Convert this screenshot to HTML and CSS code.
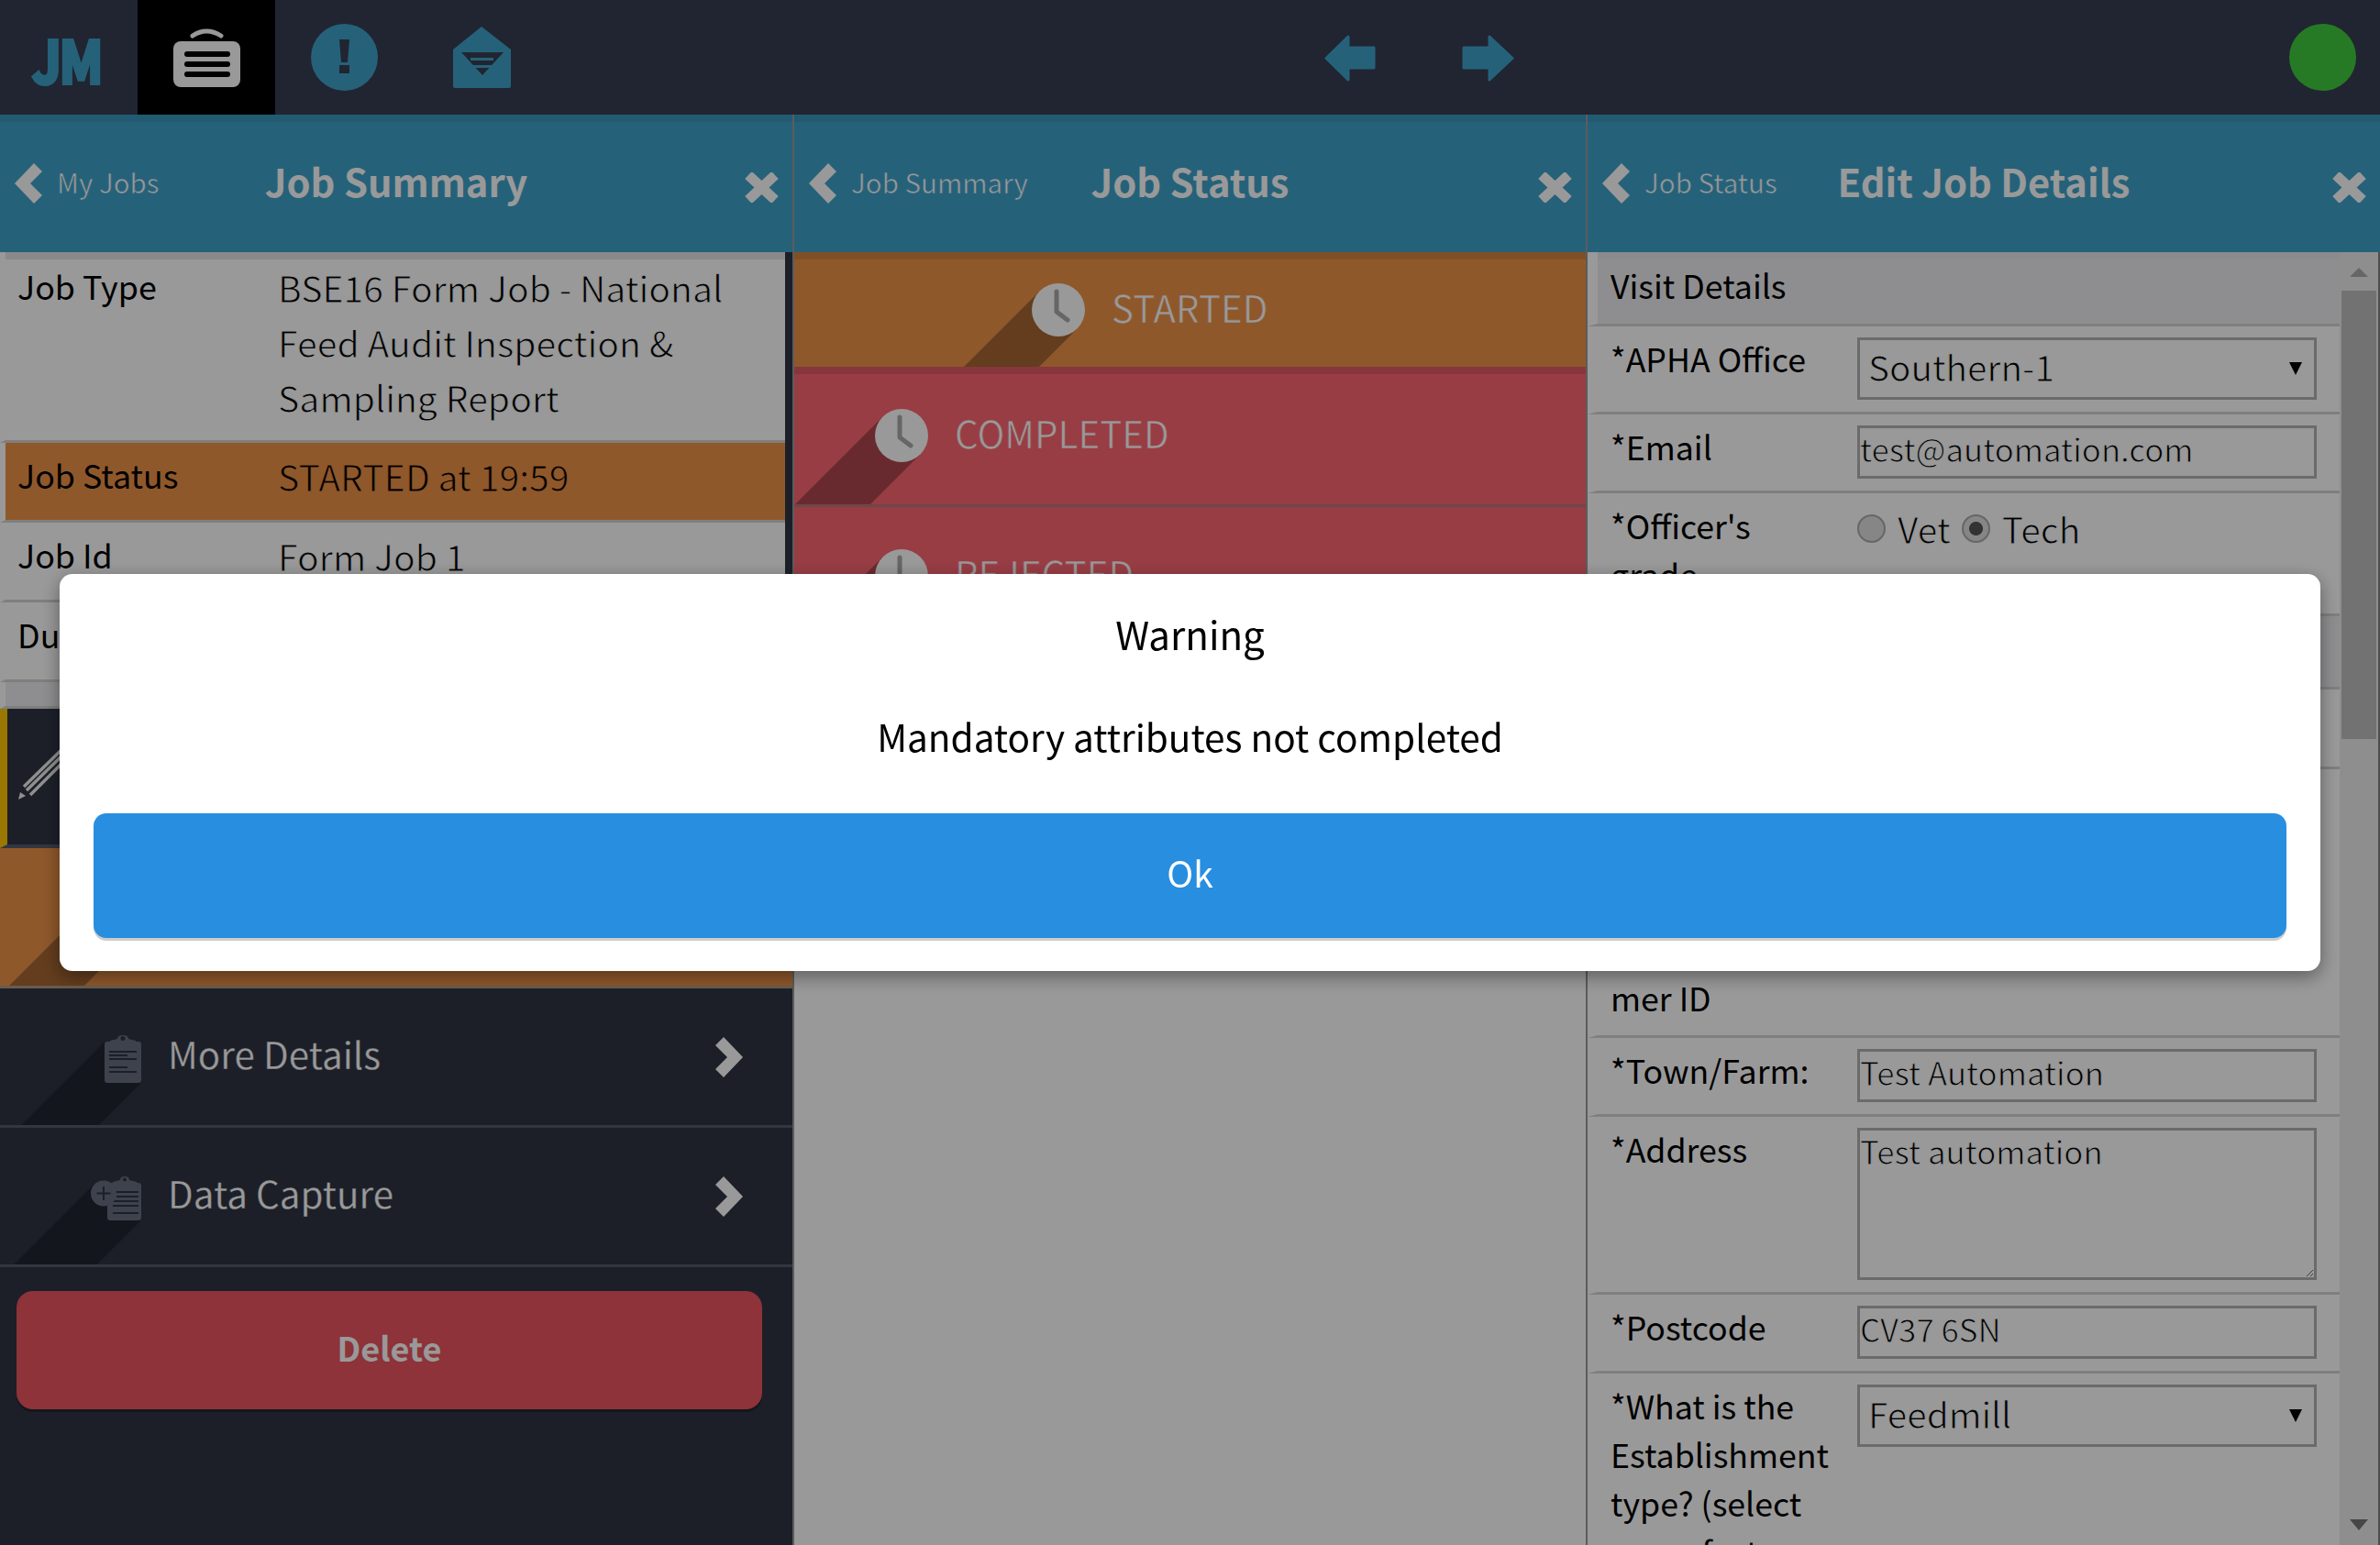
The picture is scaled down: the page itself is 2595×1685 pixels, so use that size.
FILE: index.html
```html
<!DOCTYPE html>
<html lang="en">
<head>
<meta charset="UTF-8" />
<meta name="viewport" content="width=device-width, initial-scale=1" />
<title>Edit Job Details</title>
<link rel="stylesheet" href="styles.css">
</head>
<body>
  <svg class="defs" aria-hidden="true">
    <symbol id="clock" viewBox="-29 -29 58 58" overflow="visible">
      <polygon class="long-shadow" points="-20.5,-20.5 -320.5,279.5 -279.5,320.5 20.5,20.5" />
      <circle r="29" fill="#fff" />
      <path d="M-2 -20 V2 L10 11" fill="none" stroke="#aaa" stroke-width="5" stroke-linecap="round" stroke-linejoin="round" />
    </symbol>
    <symbol id="chev-left" viewBox="0 0 30 44"><polygon points="21,0 30,9 17,22 30,35 21,44 0,22" fill="#fff" /></symbol>
    <symbol id="chev-right" viewBox="0 0 30 44"><polygon points="9,0 0,9 13,22 0,35 9,44 30,22" fill="#fff" /></symbol>
    <symbol id="close" viewBox="0 0 37 33"><path d="M4 3 L33 30 M33 3 L4 30" stroke="#fff" stroke-width="11" /></symbol>
  </svg>

  <div class="app">
    <nav class="topbar">
      <div class="nav-group">
        <a class="nav-item"><span class="logo">JM</span></a>
        <a class="nav-item active">
          <svg width="73" height="64" viewBox="0 0 73 64">
            <path d="M21 8 Q36 -2 52 8" fill="none" stroke="#fff" stroke-width="5" stroke-linecap="round" />
            <rect y="14" width="73" height="50" rx="8" fill="#fff" />
            <rect x="12" y="25" width="50" height="6" rx="3" fill="#000" />
            <rect x="12" y="36" width="50" height="6" rx="3" fill="#000" />
            <rect x="12" y="47" width="50" height="6" rx="3" fill="#000" />
          </svg>
        </a>
        <a class="nav-item">
          <svg width="73" height="73" viewBox="0 0 73 73">
            <circle cx="36.5" cy="36.5" r="36.5" fill="#3ea3cc" />
            <polygon points="31,17 42,17 40,42 33,42" fill="#373e52" />
            <rect x="31" y="45" width="11" height="9" fill="#373e52" />
          </svg>
        </a>
        <a class="nav-item">
          <svg width="63" height="67" viewBox="0 0 63 67">
            <path d="M31 0 L63 25 V65 Q63 67 61 67 H2 Q0 67 0 65 V25 Z" fill="#3ea3cc" />
            <polygon points="9,28 55,28 32,53" fill="#373e52" />
            <rect x="19" y="34" width="25" height="3" fill="#3ea3cc" />
            <rect x="20" y="42" width="24" height="3" fill="#3ea3cc" />
          </svg>
        </a>
      </div>
      <div class="nav-group history">
        <a class="nav-item">
          <svg width="56" height="51" viewBox="0 0 56 51"><path d="M26 2 L2 25.5 L26 49 V36 H54 V14 H26 Z" fill="#3ea3cc" stroke="#3ea3cc" stroke-width="3" stroke-linejoin="round" /></svg>
        </a>
        <a class="nav-item">
          <svg width="57" height="51" viewBox="0 0 57 51"><path d="M30 2 L55 25.5 L30 49 V36 H2 V14 H30 Z" fill="#3ea3cc" stroke="#3ea3cc" stroke-width="3" stroke-linejoin="round" /></svg>
        </a>
      </div>
      <span class="status-dot"></span>
    </nav>

    <main class="panes">
      <!-- job summary -->
      <section class="pane pane-summary">
        <header class="pane-head">
          <a class="back"><svg class="chev"><use href="#chev-left" /></svg><span>My Jobs</span></a>
          <h1>Job Summary</h1>
          <a class="close"><svg class="close-icon"><use href="#close" /></svg></a>
        </header>
        <div class="details">
          <div class="detail first">
            <span class="detail-label">Job Type</span>
            <span class="detail-value">BSE16 Form Job - National Feed Audit Inspection &amp; Sampling Report</span>
          </div>
          <div class="detail started-bg">
            <span class="detail-label">Job Status</span>
            <span class="detail-value">STARTED at 19:59</span>
          </div>
          <div class="detail">
            <span class="detail-label">Job Id</span>
            <span class="detail-value">Form Job 1</span>
          </div>
          <div class="detail">
            <span class="detail-label">Due</span>
            <span class="detail-value"></span>
          </div>
          <div class="detail-gap"></div>
        </div>
        <div class="edit-row">
          <svg width="70" height="76" viewBox="0 0 70 76" overflow="visible">
            <polygon points="4,63 6,55 12,59" fill="#eee" />
            <path d="M10 49 L60 0 M13 53 L65 2 M17 58 L70 5" stroke="#eee" stroke-width="3.5" />
          </svg>
        </div>
        <div class="status-row started row-action"><svg class="clock"><use href="#clock" /></svg></div>
        <a class="menu-row">
          <svg class="menu-icon" width="40" height="52" viewBox="0 0 40 52" overflow="visible">
            <polygon class="long-shadow" points="0,7 -200,207 -160,252 40,52" />
            <path d="M14 4 Q14 0 20 0 Q26 0 26 4 L34 6 V9 H6 V6 Z" fill="#666e80" />
            <rect y="7" width="40" height="45" rx="3" fill="#666e80" />
            <circle cx="20" cy="3.5" r="2.5" fill="#2f3544" />
            <path d="M5 18 H35 M5 22 H25 M5 26 H35 M5 35 H25 M5 40 H35" stroke="#2f3544" stroke-width="2" />
          </svg>
          <span>More Details</span>
          <svg class="chev"><use href="#chev-right" /></svg>
        </a>
        <a class="menu-row">
          <svg class="menu-icon" width="55" height="48" viewBox="0 0 55 48" overflow="visible">
            <polygon class="long-shadow" points="4,8 -196,208 -145,248 55,48" />
            <path d="M32 4 Q32 0 37 0 Q42 0 42 4 L50 6 V9 H24 V6 Z" fill="#666e80" />
            <rect x="18" y="7" width="37" height="41" rx="3" fill="#666e80" />
            <circle cx="37" cy="3.5" r="2" fill="#2f3544" />
            <path d="M24 17 H52 M28 22 H52 M24 27 H52 M24 32 H52 M24 40 H52" stroke="#2f3544" stroke-width="2" />
            <circle cx="14" cy="18.5" r="14" fill="#666e80" />
            <path d="M14 11 V26 M6.500 18.500 H21.500" stroke="#2f3544" stroke-width="2" />
          </svg>
          <span>Data Capture</span>
          <svg class="chev"><use href="#chev-right" /></svg>
        </a>
        <button class="delete-btn">Delete</button>
      </section>

      <!-- job status -->
      <section class="pane">
        <header class="pane-head">
          <a class="back"><svg class="chev"><use href="#chev-left" /></svg><span>Job Summary</span></a>
          <h1>Job Status</h1>
          <a class="close"><svg class="close-icon"><use href="#close" /></svg></a>
        </header>
        <div class="status-row started"><svg class="clock"><use href="#clock" /></svg><span>STARTED</span></div>
        <div class="status-row completed"><svg class="clock"><use href="#clock" /></svg><span>COMPLETED</span></div>
        <div class="status-row rejected"><svg class="clock"><use href="#clock" /></svg><span>REJECTED</span></div>
      </section>

      <!-- edit form -->
      <section class="pane pane-edit">
        <header class="pane-head">
          <a class="back"><svg class="chev"><use href="#chev-left" /></svg><span>Job Status</span></a>
          <h1>Edit Job Details</h1>
          <a class="close"><svg class="close-icon"><use href="#close" /></svg></a>
        </header>
        <div class="form-wrap">
          <form class="form">
            <div class="form-section first">Visit Details</div>
            <div class="form-row">
              <label>*APHA Office</label>
              <span class="select"><select><option>Southern-1</option></select></span>
            </div>
            <div class="form-row">
              <label>*Email</label>
              <input type="text" value="test@automation.com">
            </div>
            <div class="form-row officer">
              <label>*Officer's grade</label>
              <div class="radios">
                <input type="radio" name="grade"><span>Vet</span>
                <input type="radio" name="grade" checked><span>Tech</span>
              </div>
            </div>
            <div class="form-section hidden-section"></div>
            <div class="form-row hidden-row"></div>
            <div class="form-row tail-row"><label>mer ID</label></div>
            <div class="form-row">
              <label>*Town/Farm:</label>
              <input type="text" value="Test Automation">
            </div>
            <div class="form-row">
              <label>*Address</label>
              <textarea>Test automation</textarea>
            </div>
            <div class="form-row">
              <label>*Postcode</label>
              <input type="text" value="CV37 6SN">
            </div>
            <div class="form-row">
              <label>*What is the Establishment type? (select some fact</label>
              <span class="select"><select><option>Feedmill</option></select></span>
            </div>
          </form>
          <div class="scrollbar">
            <span class="scroll-arrow up"></span>
            <span class="scroll-thumb"></span>
            <span class="scroll-arrow down"></span>
          </div>
        </div>
      </section>
    </main>
  </div>

  <div class="overlay">
    <div class="dialog" role="alertdialog">
      <h2>Warning</h2>
      <p>Mandatory attributes not completed</p>
      <button class="ok-btn">Ok</button>
    </div>
  </div>
</body>
</html>
```

FILE: styles.css
```css
/* Reset and base styles */
* {
  box-sizing: border-box;
}
html, body {
  height: 100%;
}
body {
  margin: 0;
  overflow: hidden;
  background: #fff;
  color: #000;
  font-family: "Noto Sans CJK SC", "Noto Sans", sans-serif;
}
.defs {
  position: absolute;
  width: 0;
  height: 0;
}
.long-shadow {
  fill: rgba(0,0,0,0.3);
}
.app {
  height: 100%;
  display: flex;
  flex-direction: column;
}

/* Top bar */
.topbar {
  flex: none;
  height: 125px;
  display: flex;
  align-items: stretch;
  background: #373e52;
}
.nav-group {
  display: flex;
}
.history {
  margin-left: 797px;
  padding-top: 2px;
}
.nav-item {
  width: 150px;
  display: flex;
  align-items: center;
  justify-content: center;
}
.nav-item.active {
  background: #000;
}
.logo {
  display: block;
  margin-right: 6px;
  color: #3ea3cc;
  font-size: 64px;
  line-height: 1;
  font-weight: 700;
  letter-spacing: -3px;
  -webkit-text-stroke: 4px #3ea3cc;
  transform: scaleX(0.88);
}
.status-dot {
  align-self: center;
  width: 73px;
  height: 73px;
  margin-left: auto;
  margin-right: 26px;
  border-radius: 50%;
  background: #41cb3e;
}

/* Panes */
.panes {
  flex: 1;
  min-height: 0;
  display: grid;
  grid-template-columns: 864px 865px 1fr;
}
.pane {
  min-height: 0;
  overflow: hidden;
  border-left: 2px solid #999;
  background: #fff;
}
.pane-summary {
  border-left: none;
  background: #2f3544;
}
.pane-head {
  height: 150px;
  display: grid;
  grid-template-columns: 1fr auto 1fr;
  align-items: center;
  background: #3ea3cc;
  color: #fff;
  box-shadow: inset 0 8px 0 rgba(0,0,0,0.08);
}
.pane-head h1 {
  margin: 0 0 6px;
  font-size: 41.7px;
  line-height: 60px;
  font-weight: 700;
}
.back {
  display: flex;
  align-items: center;
  gap: 16px;
  padding-left: 16px;
  font-size: 29.5px;
  -webkit-text-stroke: 0.6px #3ea3cc;
}
.back span {
  margin-bottom: 4px;
}
.chev {
  width: 30px;
  height: 44px;
  flex: none;
}
.close {
  justify-self: end;
  display: flex;
  padding: 8px 15px 0 0;
}
.close-icon {
  width: 37px;
  height: 33px;
}

/* Summary list */
.details {
  margin-right: 8px;
  background: #fff;
}
.detail {
  display: grid;
  grid-template-columns: 284px 1fr;
  height: 87px;
  padding: 8px 20px 0 13px;
  border-left: 6px solid #fff;
  border-bottom: 3px solid #d4d4d4;
  font-size: 35.8px;
}
.detail.first {
  height: 208px;
  padding-top: 10px;
  box-shadow: inset 0 8px 0 rgba(0,0,0,0.1);
}
.detail-label {
  line-height: 52px;
}
.detail-value {
  margin-top: -2px;
  font-size: 39.2px;
  line-height: 60px;
  -webkit-text-stroke: 0.9px #fff;
}
.started-bg {
  background: #ee9348;
}
.started-bg .detail-value {
  -webkit-text-stroke-color: #ee9348;
}
.detail-gap {
  height: 29px;
  border-left: 6px solid #fff;
  border-bottom: 3px solid #d4d4d4;
  background: #ededf0;
}
.edit-row {
  height: 152px;
  display: flex;
  align-items: center;
  padding-left: 8px;
  border-left: 8px solid #ffc700;
  border-bottom: 4px solid #555b6b;
}

/* Status rows */
.status-row {
  height: 150px;
  display: flex;
  align-items: center;
  gap: 29px;
  overflow: hidden;
  color: #fff;
  font-size: 40.3px;
}
.status-row span {
  margin-bottom: 7px;
  -webkit-text-stroke: 0.6px #fd6672;
}
.clock {
  width: 58px;
  height: 58px;
  flex: none;
  overflow: visible;
}
.started {
  height: 125px;
  padding-left: 259px;
  background: #ee9348;
  box-shadow: inset 0 8px 0 rgba(0,0,0,0.1);
}
.started span {
  -webkit-text-stroke-color: #ee9348;
}
.completed {
  padding-left: 88px;
  background: #fd6672;
  box-shadow: inset 0 8px 0 rgba(0,0,0,0.1);
}
.rejected {
  height: 153px;
  padding-left: 88px;
  border-top: 3px solid #b8777c;
  background: #fd6672;
}
.row-action {
  height: 153px;
  padding-left: 97px;
  border-bottom: 3px solid #b09a84;
  box-shadow: none;
}

/* Menu rows under the list */
.menu-row {
  position: relative;
  height: 152px;
  display: grid;
  grid-template-columns: 154px 1fr auto;
  align-items: center;
  column-gap: 29px;
  padding-right: 54px;
  overflow: hidden;
  border-bottom: 3px solid #555b6b;
  color: #fff;
  font-size: 40.4px;
}
.menu-row span {
  margin-bottom: 8px;
  -webkit-text-stroke: 0.3px #2f3544;
}
.menu-icon {
  justify-self: end;
  margin-top: 4px;
}
.delete-btn {
  display: block;
  width: 813px;
  height: 129px;
  margin: 26px 0 0 18px;
  padding: 0 0 8px;
  border: none;
  border-radius: 18px;
  background: #eb5560;
  box-shadow: 0 3px 0 rgba(0,0,0,0.3);
  color: #fff;
  font: 700 36px "Noto Sans CJK SC", "Noto Sans", sans-serif;
}

/* Edit form */
.form-wrap {
  height: calc(100% - 150px);
  display: grid;
  grid-template-columns: 820px 42px;
  border-right: 2px solid #808080;
}
.form {
  min-height: 0;
}
.form-section {
  height: 81px;
  padding: 8px 0 0 14px;
  border-left: 11px solid #fff;
  border-bottom: 3px solid #d4d4d4;
  background: #ededf0;
  font-size: 35.7px;
  line-height: 56px;
}
.form-section.first {
  box-shadow: inset 0 8px 0 rgba(0,0,0,0.02);
}
.hidden-section {
  height: 80px;
}
.form-row {
  display: grid;
  grid-template-columns: 269px 501px;
  align-items: start;
  padding: 12px 0 13px 14px;
  border-left: 11px solid #fff;
  border-bottom: 3px solid #d4d4d4;
}
.form-row label {
  margin-top: -4px;
  padding-right: 20px;
  font-size: 35.7px;
  line-height: 53px;
}
.form-row input[type="text"],
.form-row textarea {
  display: block;
  width: 501px;
  height: 58px;
  margin: 0;
  padding: 0 0 9px;
  border: 3px solid #b3b3b3;
  border-radius: 0;
  background: transparent;
  color: #000;
  font: 400 34.8px/44px "Noto Sans CJK SC", "Noto Sans", sans-serif;
  -webkit-text-stroke: 0.9px #fff;
}
.form-row textarea {
  height: 166px;
  padding: 0;
  resize: vertical;
}
.select {
  position: relative;
  display: block;
  width: 501px;
}
.select::after {
  content: "";
  position: absolute;
  right: 16px;
  top: 27px;
  border-left: 7px solid transparent;
  border-right: 7px solid transparent;
  border-top: 14px solid #000;
}
.select select {
  appearance: none;
  display: block;
  width: 100%;
  height: 68px;
  margin: 0;
  padding: 0 0 8px 9px;
  border: 3px solid #b3b3b3;
  border-radius: 0;
  background: transparent;
  color: #000;
  font: 400 38.7px "Noto Sans CJK SC", "Noto Sans", sans-serif;
  -webkit-text-stroke: 0.9px #fff;
}
.officer {
  height: 134px;
}
.radios {
  display: flex;
  align-items: center;
  font-size: 39px;
  line-height: 53px;
  -webkit-text-stroke: 0.9px #fff;
}
.radios input {
  appearance: none;
  width: 31px;
  height: 31px;
  margin: 0 13px 0 0;
  border: 2px solid #aaa;
  border-radius: 50%;
  background: #e0e0e0;
}
.radios input:checked {
  background: radial-gradient(circle, #555 0 7px, #e0e0e0 8px);
}
.radios span {
  margin-right: 12px;
}
.hidden-row {
  height: 87px;
}
.tail-row {
  height: 293px;
  align-items: end;
  padding-bottom: 15px;
}

/* Scrollbar */
.scrollbar {
  display: flex;
  flex-direction: column;
  background: #ededed;
}
.scroll-arrow {
  position: relative;
  flex: none;
  height: 42px;
}
.scroll-arrow::after {
  content: "";
  position: absolute;
  left: 11px;
  border-left: 10px solid transparent;
  border-right: 10px solid transparent;
}
.up::after {
  top: 17px;
  border-bottom: 10px solid #aaa;
}
.down {
  margin-top: auto;
  height: 35px;
}
.down::after {
  top: 7px;
  border-top: 12px solid #777;
}
.scroll-thumb {
  height: 489px;
  margin: 0 2px;
  background: #bfbfbf;
}

/* Modal */
.overlay {
  position: fixed;
  inset: 0;
  display: flex;
  align-items: center;
  justify-content: center;
  background: rgba(0,0,0,0.4);
}
.dialog {
  width: 95%;
  height: 433px;
  padding: 35px 37px;
  border-radius: 14px;
  background: #fff;
  box-shadow: 0 6px 20px rgba(0,0,0,0.4);
  text-align: center;
}
.dialog h2 {
  margin: 0;
  font-size: 42px;
  line-height: 60px;
  font-weight: 400;
}
.dialog p {
  margin: 52px 0 54px;
  font-size: 40.5px;
  line-height: 60px;
}
.ok-btn {
  display: block;
  width: 100%;
  height: 136px;
  padding: 0 0 8px;
  border: none;
  border-radius: 14px;
  background: #288ee0;
  box-shadow: 0 3px 0 #ccc;
  color: #fff;
  font: 400 39px "Noto Sans CJK SC", "Noto Sans", sans-serif;
}
```
